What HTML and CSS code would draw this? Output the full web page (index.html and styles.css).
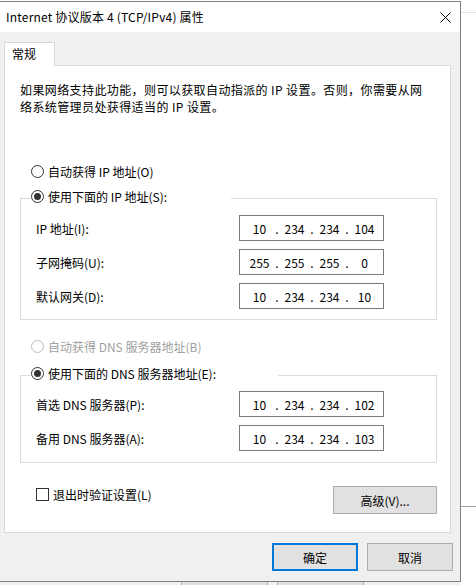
FILE: index.html
```html
<!DOCTYPE html>
<html lang="zh-CN">
<head>
  <meta charset="UTF-8" />
  <meta name="viewport" content="width=device-width, initial-scale=1.0"/>
  <title>Internet 协议版本 4 (TCP/IPv4) 属性</title>
  <link rel="stylesheet" href="styles.css">
</head>
<body>
  <div class="desktop">
    <!-- bits of the window behind -->
    <div class="behind-right"></div>
    <div class="behind-bottom">
      <span class="ghost-btn"></span>
      <span class="ghost-btn"></span>
    </div>

    <div class="window">
      <div class="titlebar">
        <span class="title">Internet 协议版本 4 (TCP/IPv4) 属性</span>
        <svg class="close" width="11" height="11" viewBox="0 0 11 11">
          <path d="M0.5 0.5 L10.5 10.5 M10.5 0.5 L0.5 10.5" stroke="#000" stroke-width="1" fill="none"/>
        </svg>
      </div>

      <div class="body">
        <div class="tabs"><span class="tab">常规</span></div>

        <div class="panel">
          <p class="desc">如果网络支持此功能，则可以获取自动指派的 IP 设置。否则，你需要从网<br>络系统管理员处获得适当的 IP 设置。</p>

          <!-- IP -->
          <label class="opt opt-first"><input type="radio" name="ip"> 自动获得 IP 地址(O)</label>
          <fieldset class="group group-ip">
            <legend class="legend-ip">
              <label class="opt"><input type="radio" name="ip" checked> 使用下面的 IP 地址(S):</label>
            </legend>
            <div class="row">
              <span class="lbl">IP 地址(I):</span>
              <div class="ipbox"><span>10</span><i>.</i><span>234</span><i>.</i><span>234</span><i>.</i><span>104</span></div>
            </div>
            <div class="row">
              <span class="lbl">子网掩码(U):</span>
              <div class="ipbox"><span>255</span><i>.</i><span>255</span><i>.</i><span>255</span><i>.</i><span>0</span></div>
            </div>
            <div class="row">
              <span class="lbl">默认网关(D):</span>
              <div class="ipbox"><span>10</span><i>.</i><span>234</span><i>.</i><span>234</span><i>.</i><span>10</span></div>
            </div>
          </fieldset>

          <!-- DNS -->
          <label class="opt opt-disabled"><input type="radio" name="dns" disabled> 自动获得 DNS 服务器地址(B)</label>
          <fieldset class="group group-dns">
            <legend class="legend-dns">
              <label class="opt"><input type="radio" name="dns" checked> 使用下面的 DNS 服务器地址(E):</label>
            </legend>
            <div class="row">
              <span class="lbl">首选 DNS 服务器(P):</span>
              <div class="ipbox"><span>10</span><i>.</i><span>234</span><i>.</i><span>234</span><i>.</i><span>102</span></div>
            </div>
            <div class="row">
              <span class="lbl">备用 DNS 服务器(A):</span>
              <div class="ipbox"><span>10</span><i>.</i><span>234</span><i>.</i><span>234</span><i>.</i><span>103</span></div>
            </div>
          </fieldset>

          <div class="panel-foot">
            <label class="opt opt-check"><input type="checkbox"> 退出时验证设置(L)</label>
            <button class="btn btn-adv">高级(V)...</button>
          </div>
        </div>

        <div class="footer">
          <button class="btn btn-ok">确定</button>
          <button class="btn">取消</button>
        </div>
      </div>
    </div>
  </div>
</body>
</html>
```

FILE: styles.css
```css
* {
  box-sizing: border-box;
}

body {
  margin: 0;
  background: #fff;
  font-family: "Noto Sans CJK SC", sans-serif;
  font-size: 12px;
  color: #000;
}

.desktop {
  position: relative;
  width: 476px;
  height: 585px;
  overflow: hidden;
}

.behind-right {
  position: absolute;
  left: 461px;
  top: 12px;
  width: 20px;
  height: 495px;
  border-top: 1px solid #e3e3e3;
  border-bottom: 1px solid #a0a0a0;
}

.behind-bottom {
  position: absolute;
  left: 0;
  top: 580px;
  width: 460px;
  height: 10px;
  background: #f0f0f0;
  display: flex;
  gap: 9px;
  padding-left: 181px;
}

.ghost-btn {
  width: 87px;
  height: 10px;
  border: 1px solid #adadad;
  background: #e1e1e1;
}

.window {
  position: relative;
  margin-top: 1px;
  width: 461px;
  height: 581px;
  border: 1px solid #808080;
  border-left: none;
  background: #f0f0f0;
}

.titlebar {
  height: 30px;
  background: #fff;
  display: flex;
  align-items: center;
  justify-content: space-between;
  padding: 0 9px 0 6px;
}

.title {
  line-height: 16px;
  letter-spacing: 0.2px;
}

.close {
  display: block;
}

.body {
  padding: 10px 7px 0 4px;
}

.tabs {
  display: flex;
  height: 23px;
}

.tab {
  position: relative;
  z-index: 1;
  width: 51px;
  height: 24px;
  padding-left: 7px;
  line-height: 22px;
  background: #fff;
  border: 1px solid #d9d9d9;
  border-bottom: none;
}

.panel {
  margin-right: 2px;
  height: 468px;
  background: #fff;
  border: 1px solid #d9d9d9;
  padding: 0 13px 0 15px;
}

.desc {
  margin: 15px 0 48px;
  line-height: 17px;
  letter-spacing: 0.4px;
  white-space: nowrap;
}

/* radio / checkbox rows */
.opt {
  display: flex;
  align-items: center;
  height: 16px;
  white-space: nowrap;
}

.opt-first,
.opt-disabled {
  margin-left: 11px;
}

.opt-disabled {
  color: #a0a0a0;
  margin-top: 18px;
}

.opt input {
  appearance: none;
  -webkit-appearance: none;
  width: 13px;
  height: 13px;
  margin: 0 4px 0 0;
  border: 1px solid #333;
  background: #fff;
  flex: none;
}

.opt input[type="radio"] {
  border-radius: 50%;
  display: grid;
  place-items: center;
}

.opt input[type="radio"]:checked::before {
  content: "";
  width: 7px;
  height: 7px;
  border-radius: 50%;
  background: #333;
}

.opt input:disabled {
  border-color: #bcbcbc;
}

/* group boxes */
.group {
  margin: 9px 0 0;
  padding: 7px 0 10px 10px;
  border: 1px solid #dcdcdc;
  min-width: 0;
}

.group-dns {
  margin-top: 11px;
  padding: 6px 0 11px 10px;
}

.group legend {
  margin: 0;
  padding: 0 0 4px;
  height: 20px;
}

.legend-ip {
  width: 200px;
}

.legend-dns {
  width: 247px;
}

.row {
  display: flex;
  align-items: center;
  height: 26px;
  margin-left: 5px;
}

.row + .row {
  margin-top: 8px;
}

.lbl {
  width: 203px;
  flex: none;
}

.ipbox {
  display: flex;
  align-items: center;
  width: 145px;
  height: 26px;
  border: 1px solid #7a7a7a;
  padding-left: 5px;
}

.ipbox span {
  width: 29px;
  text-align: center;
}

.ipbox i {
  font-style: normal;
  width: 6px;
  text-align: center;
}

/* bottom of the tab page */
.panel-foot {
  display: flex;
  justify-content: space-between;
  align-items: flex-start;
  margin-top: 23px;
}

.opt-check {
  margin-left: 16px;
}

.btn {
  font-family: inherit;
  font-size: 12px;
  color: #000;
  background: #e1e1e1;
  border: 1px solid #adadad;
  height: 28px;
  padding: 0;
}

.btn-adv {
  width: 104px;
}

.footer {
  display: flex;
  justify-content: flex-end;
  gap: 9px;
  margin-top: 10px;
}

.footer .btn {
  width: 86px;
}

.btn-ok {
  border: 2px solid #0078d7;
}
```
